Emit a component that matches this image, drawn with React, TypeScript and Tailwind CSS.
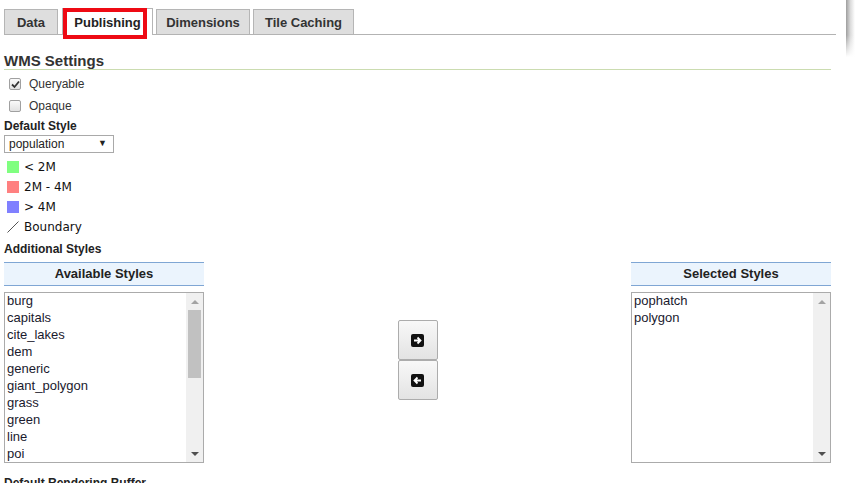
import React from 'react';

const available = [
  'burg',
  'capitals',
  'cite_lakes',
  'dem',
  'generic',
  'giant_polygon',
  'grass',
  'green',
  'line',
  'poi',
];
const selected = ['pophatch', 'polygon'];

function Tab({ label, active, w }: { label: string; active?: boolean; w: string }) {
  return (
    <div
      className={
        active
          ? `${w} h-[27px] -mb-px pt-[1px] border border-b-0 border-[#b5b5b5] bg-white flex items-center justify-center text-[13px] font-bold text-[#222]`
          : `${w} h-[25px] pt-[2px] border border-b-0 border-[#b5b5b5] bg-[#dedede] flex items-center justify-center text-[13px] font-bold text-[#333]`
      }
    >
      {label}
    </div>
  );
}

function Check({ checked }: { checked?: boolean }) {
  return (
    <div className="w-[12px] h-[12px] rounded-[2px] border border-[#a0a0a0] bg-gradient-to-b from-[#fafafa] to-[#e2e2e2] flex items-center justify-center">
      {checked && (
        <svg width="9" height="9" viewBox="0 0 9 9">
          <path d="M1 4.5 L3.5 7 L8 1.5" fill="none" stroke="#333" strokeWidth="1.8" />
        </svg>
      )}
    </div>
  );
}

function Arrow({ dir }: { dir: 'up' | 'down' }) {
  return (
    <div className="h-[17px] flex items-center justify-center">
      <div
        className={
          dir === 'up'
            ? 'w-0 h-0 border-l-[4px] border-r-[4px] border-b-[4px] border-l-transparent border-r-transparent border-b-[#a3a3a3]'
            : 'w-0 h-0 border-l-[4px] border-r-[4px] border-t-[4px] border-l-transparent border-r-transparent border-t-[#505050]'
        }
      />
    </div>
  );
}

function StyleList({ title, items, thumb }: { title: string; items: string[]; thumb?: boolean }) {
  return (
    <div className="w-[200px] flex flex-col">
      <div className="h-[24px] border-t border-b border-[#7fa6d4] bg-[#ebf4fd] flex items-center justify-center text-[13px] font-bold text-[#222]">
        {title}
      </div>
      <div className="mt-[6px] h-[171px] border border-[#ababab] bg-white flex">
        <div className="flex-1 pl-[2px] -mt-px font-['Liberation_Sans',Arial,sans-serif] text-[13px] leading-[17px] text-[#1a1a2e]">
          {items.map((s) => (
            <div key={s}>{s}</div>
          ))}
        </div>
        <div className="w-[17px] bg-[#f0f0f0] flex flex-col">
          <Arrow dir="up" />
          <div className="flex-1 px-[2px]">
            {thumb && <div className="h-[68px] bg-[#c1c1c1]" />}
          </div>
          <Arrow dir="down" />
        </div>
      </div>
    </div>
  );
}

function MoveButton({ dir }: { dir: 'right' | 'left' }) {
  return (
    <div className="w-[40px] h-[40px] border border-[#acacac] rounded-[2px] bg-gradient-to-b from-[#f8f8f8] to-[#e3e3e3] flex items-center justify-center">
      <svg width="13" height="13" viewBox="0 0 13 13">
        <rect x="0" y="0" width="13" height="13" rx="2" fill="#111" />
        {dir === 'right' ? (
          <path d="M3 6.5 H9 M6.5 3.5 L9.5 6.5 L6.5 9.5" fill="none" stroke="#fff" strokeWidth="1.8" />
        ) : (
          <path d="M10 6.5 H4 M6.5 3.5 L3.5 6.5 L6.5 9.5" fill="none" stroke="#fff" strokeWidth="1.8" />
        )}
      </svg>
    </div>
  );
}

function Legend({ color, label }: { color?: string; label: string }) {
  return (
    <div className="h-[20px] flex items-center pl-[3px] gap-[5px]">
      {color ? (
        <div className="w-[12px] h-[12px]" style={{ backgroundColor: color }} />
      ) : (
        <svg width="12" height="12" viewBox="0 0 12 12">
          <path d="M0.5 11.5 L11.5 0.5" stroke="#555" strokeWidth="1" />
        </svg>
      )}
      <span className="font-['DejaVu_Sans',sans-serif] text-[12px] text-[#111]">{label}</span>
    </div>
  );
}

export default function App() {
  return (
    <div className="relative w-[855px] h-[483px] overflow-hidden bg-white font-['Liberation_Sans',Arial,sans-serif] text-[#333]">
      {/* tab strip */}
      <div className="pt-[9px] pl-[4px] w-[836px]">
        <div className="flex items-end border-b border-[#b3b3b3] h-[26px]">
          <Tab label="Data" w="w-[54px]" />
          <div className="w-[4px]" />
          <Tab label="Publishing" w="w-[91px]" active />
          <div className="w-[3px]" />
          <Tab label="Dimensions" w="w-[94px]" />
          <div className="w-[3px]" />
          <Tab label="Tile Caching" w="w-[101px]" />
        </div>
      </div>

      {/* annotation box */}
      <div className="absolute left-[63px] top-[8px] w-[84px] h-[31px] border-[4px] border-[#ee0a14]" />

      {/* right-edge shadow */}
      <div className="absolute right-0 top-0 w-[9px] h-[57px] bg-gradient-to-r from-[#9e9e9e] via-[#dcdcdc] to-white">
        <div className="absolute bottom-0 left-0 right-0 h-[22px] bg-gradient-to-b from-transparent to-white" />
      </div>

      <div className="pl-[4px] w-[831px]">
        <div className="mt-[15px] h-[20px] pt-[3px] flex items-center text-[15px] font-bold text-[#333] border-b border-[#cbdcb0]">
          WMS Settings
        </div>

        <div className="mt-[3px] h-[22px] flex items-center gap-[8px] pl-[5px] text-[12px]">
          <Check checked />
          <span>Queryable</span>
        </div>
        <div className="h-[22px] flex items-center gap-[8px] pl-[5px] text-[12px]">
          <Check />
          <span>Opaque</span>
        </div>

        <div className="h-[18px] flex items-center text-[12px] font-bold text-[#222]">Default Style</div>
        <div className="w-[110px] h-[18px] border border-[#a9a9a9] flex items-center justify-between pl-[4px] pr-[6px] text-[12px] text-[#222]">
          <span>population</span>
          <span className="text-[9px]">▼</span>
        </div>

        <div className="mt-[4px]">
          <Legend color="#80ff80" label="< 2M" />
          <Legend color="#ff8080" label="2M - 4M" />
          <Legend color="#8080ff" label="> 4M" />
          <Legend label="Boundary" />
        </div>

        <div className="mt-[2px] h-[20px] flex items-center text-[12px] font-bold text-[#222]">Additional Styles</div>

        <div className="mt-[3px] flex justify-between">
          <StyleList title="Available Styles" items={available} thumb />
          <div className="pt-[58px] flex flex-col">
            <MoveButton dir="right" />
            <MoveButton dir="left" />
          </div>
          <StyleList title="Selected Styles" items={selected} />
        </div>

        <div className="mt-[11px] h-[18px] flex items-center text-[12px] font-bold text-[#222]">
          Default Rendering Buffer
        </div>
      </div>
    </div>
  );
}
